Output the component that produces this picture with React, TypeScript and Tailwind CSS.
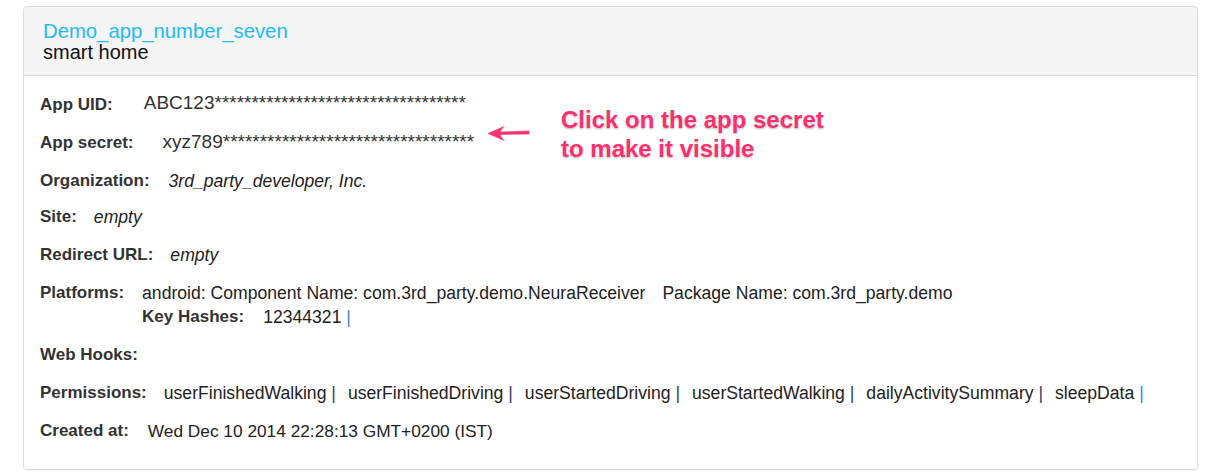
import React from 'react';

const permissions = [
  'userFinishedWalking',
  'userFinishedDriving',
  'userStartedDriving',
  'userStartedWalking',
  'dailyActivitySummary',
  'sleepData',
];

function Label({ children }: { children: React.ReactNode }) {
  return <span className="font-bold text-[17px] text-[#333] shrink-0">{children}</span>;
}

export default function App() {
  return (
    <div className="relative w-[1212px] h-[474px] bg-white font-['Liberation_Sans',Arial,sans-serif] text-[#222] overflow-hidden">
      <div className="ml-[23px] mt-[6px] w-[1175px] border border-[#dcdcdc] rounded-[4px] shadow-[0_1px_1px_rgba(0,0,0,0.05)]">
        {/* header */}
        <div className="bg-[#f5f5f5] border-b border-[#dcdcdc] rounded-t-[4px] px-[19px] pt-[14px] pb-[12px]">
          <div className="text-[20.3px] leading-[21px] text-[#1dbdf3]">Demo_app_number_seven</div>
          <div className="text-[20px] leading-[21px] text-[#111]">smart home</div>
        </div>

        {/* body */}
        <div className="px-[16px] pt-[18px] pb-[27px] flex flex-col gap-[16px] text-[17.6px] leading-[22px]">
          <div className="flex items-center">
            <Label>App UID:</Label>
            <span className="ml-[31px] text-[19px] -mt-[5px] text-[#333]">
              ABC123**********************************
            </span>
          </div>
          <div className="flex items-center">
            <Label>App secret:</Label>
            <span className="ml-[29px] text-[19px] -mt-[2px] text-[#333]">
              xyz789**********************************
            </span>
          </div>
          <div className="flex items-center">
            <Label>Organization:</Label>
            <span className="ml-[19px] italic">3rd_party_developer, Inc.</span>
          </div>
          <div className="flex items-center -mt-[2px]">
            <Label>Site:</Label>
            <span className="ml-[17px] italic">empty</span>
          </div>
          <div className="flex items-center">
            <Label>Redirect URL:</Label>
            <span className="ml-[17px] italic">empty</span>
          </div>
          <div className="flex items-start">
            <Label>Platforms:</Label>
            <div className="ml-[18px] flex flex-col gap-[2px]">
              <div className="flex gap-[17px]">
                <span>android: Component Name: com.3rd_party.demo.NeuraReceiver</span>
                <span>Package Name: com.3rd_party.demo</span>
              </div>
              <div className="flex">
                <Label>Key Hashes:</Label>
                <span className="ml-[19px]">
                  12344321 <span className="text-[#3d7fd6]">|</span>
                </span>
              </div>
            </div>
          </div>
          <div className="flex items-center">
            <Label>Web Hooks:</Label>
          </div>
          <div className="flex items-center">
            <Label>Permissions:</Label>
            <div className="ml-[17px] flex gap-[12px]">
              {permissions.map((p, i) => (
                <span key={p}>
                  {p}{' '}
                  <span className={i === permissions.length - 1 ? 'text-[#3d7fd6]' : 'text-[#2b3f66]'}>|</span>
                </span>
              ))}
            </div>
          </div>
          <div className="flex items-center">
            <Label>Created at:</Label>
            <span className="ml-[19px] text-[17.3px]">Wed Dec 10 2014 22:28:13 GMT+0200 (IST)</span>
          </div>
        </div>
      </div>

      {/* annotation overlay */}
      <svg className="absolute left-[486px] top-[124px]" width="46" height="18" viewBox="0 0 46 18">
        <path
          d="M2 9.5 L18 2.5 Q14 6.5 14.5 8 L43 7 L43 10 L14.5 10.5 Q14 12.5 18 16.5 Z"
          fill="#f8336f"
          stroke="#f8336f"
          strokeWidth="0.6"
          strokeLinejoin="round"
        />
      </svg>
      <div className="absolute left-[561px] top-[105px] text-[24px] leading-[29px] font-bold text-[#fb2f6e] [text-shadow:0_0_2px_#fff,0_1px_2px_rgba(0,0,0,0.35)]">
        <div>Click on the app secret</div>
        <div>to make it visible</div>
      </div>
    </div>
  );
}
